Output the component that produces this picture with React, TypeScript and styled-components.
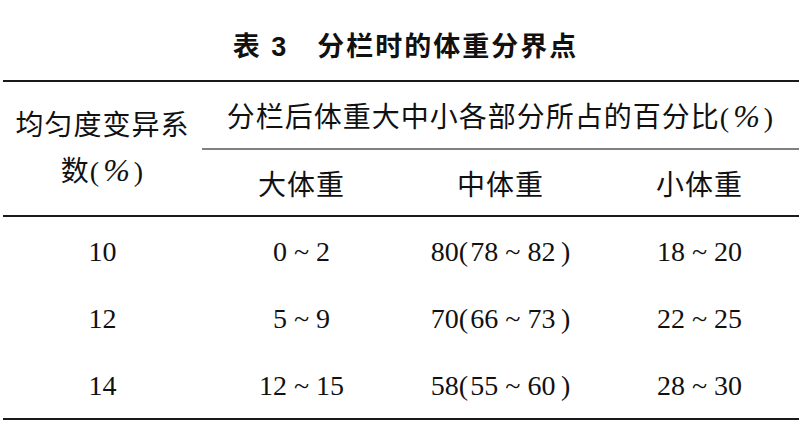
import React from 'react'
import styled, { createGlobalStyle } from 'styled-components'

let GlobalStyle = createGlobalStyle`
	html, body {
		margin: 0;
		padding: 0;
		background: #fff;
	}
`

type Row = {
	cv: string;
	large: string;
	middle: string;
	small: string;
}

let rows: Row[] = [
	{ cv: '10', large: '0 ~ 2', middle: '80(\u200a78 ~ 82\u2009)', small: '18 ~ 20' },
	{ cv: '12', large: '5 ~ 9', middle: '70(\u200a66 ~ 73\u2009)', small: '22 ~ 25' },
	{ cv: '14', large: '12 ~ 15', middle: '58(\u200a55 ~ 60\u2009)', small: '28 ~ 30' },
]

let Page = styled.div`
	width: 811px;
	height: 446px;
	padding: 0 3px;
	box-sizing: border-box;
	color: #111;
`

let Caption = styled.div`
	height: 80px;
	padding-top: 9px;
	box-sizing: border-box;
	display: flex;
	align-items: center;
	justify-content: center;
	font-family: "Liberation Sans", "Noto Sans CJK SC", sans-serif;
	font-weight: 700;
	font-size: 27px;
	letter-spacing: 2px;
	white-space: pre;
`

let Grid = styled.div`
	display: grid;
	width: 796px;
	grid-template-columns: repeat(4, 199px);
	grid-template-rows: 68px 67px repeat(3, 67px);
	border-top: 2px solid #1a1a1a;
	border-bottom: 2px solid #1a1a1a;
	font-family: "Liberation Serif", "Noto Sans CJK SC", serif;
	font-size: 28px;
`

let Cell = styled.div<{ $rule?: 'dark' | 'grey' }>`
	display: flex;
	align-items: center;
	justify-content: center;
	box-sizing: border-box;
	white-space: pre;
	border-bottom: ${p => p.$rule === 'dark' ? '2px solid #1a1a1a' : p.$rule === 'grey' ? '2px solid #808080' : 'none'};
`

let StubHead = styled(Cell)`
	grid-row: span 2;
	flex-direction: column;
	line-height: 45px;
	letter-spacing: 1px;
`

let GroupHead = styled(Cell)`
	grid-column: span 3;
	letter-spacing: 1px;
`

let ColHead = styled(Cell)`
	letter-spacing: 1px;
`

let Num = styled(Cell)`
	padding-top: 3px;
`

let Pct = styled.span`
	font-style: italic;
	font-size: 32px;
	margin: 0 4px 0 3px;
	letter-spacing: 0;
`

export default function App() {
	return (
		<Page>
			<GlobalStyle />
			<Caption>表 3{'\u3000'}分栏时的体重分界点</Caption>
			<Grid>
				<StubHead $rule="dark">
					<span>均匀度变异系</span>
					<span>数(<Pct>%</Pct>)</span>
				</StubHead>
				<GroupHead $rule="grey">
					<span>分栏后体重大中小各部分所占的百分比(<Pct>%</Pct>)</span>
				</GroupHead>
				<ColHead $rule="dark">大体重</ColHead>
				<ColHead $rule="dark">中体重</ColHead>
				<ColHead $rule="dark">小体重</ColHead>
				{rows.map(r => (
					<React.Fragment key={r.cv}>
						<Num>{r.cv}</Num>
						<Num>{r.large}</Num>
						<Num>{r.middle}</Num>
						<Num>{r.small}</Num>
					</React.Fragment>
				))}
			</Grid>
		</Page>
	)
}
